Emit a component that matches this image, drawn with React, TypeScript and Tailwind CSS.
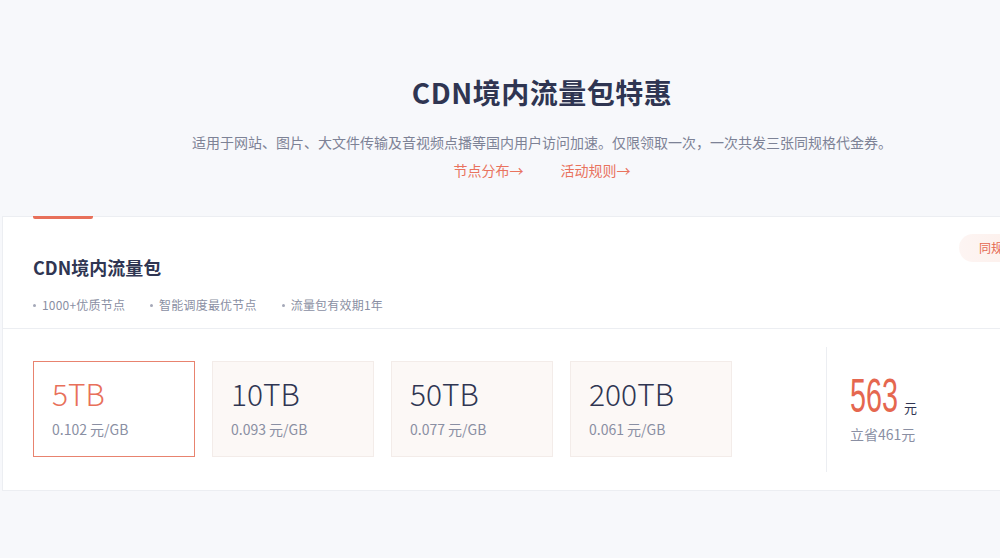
import React, { useState } from 'react';

const FONT = '"Noto Sans CJK SC", "Noto Sans", sans-serif';

const plans = [
  { size: '5TB', unit: '0.102 元/GB' },
  { size: '10TB', unit: '0.093 元/GB' },
  { size: '50TB', unit: '0.077 元/GB' },
  { size: '200TB', unit: '0.061 元/GB' },
];

const features = ['1000+优质节点', '智能调度最优节点', '流量包有效期1年'];

const App: React.FC = () => {
  const [active, setActive] = useState(0);

  return (
    <div className="h-[558px] w-full overflow-hidden bg-[#f7f8fb]" style={{ fontFamily: FONT }}>
      {/* Header */}
      <div className="flex flex-col items-center pt-[72px] pl-[84px]">
        <h1 className="text-[28px] leading-[40px] font-bold tracking-[0.5px] text-[#2f3552]">CDN境内流量包特惠</h1>
        <p className="mt-[20px] text-[14px] leading-[20px] text-[#7d8296]">
          适用于网站、图片、大文件传输及音视频点播等国内用户访问加速。仅限领取一次，一次共发三张同规格代金券。
        </p>
        <div className="mt-[8px] flex gap-[37px] text-[14px] leading-[20px] text-[#e9735e]">
          <a className="cursor-pointer">节点分布→</a>
          <a className="cursor-pointer">活动规则→</a>
        </div>
      </div>

      {/* Card */}
      <div className="relative mt-[36px] ml-[2px] w-[1030px] border border-[#eceef2] bg-white">
        <div className="absolute -top-px left-[30px] h-[3px] w-[60px] rounded-b-[2px] bg-[#e8705a]" />
        <div className="absolute top-[17px] left-[956px] flex h-[28px] items-center whitespace-nowrap rounded-full bg-gradient-to-r from-[#fdf5f3] to-[#fdeee9] px-[20px] text-[12px] text-[#e5674f]">
          同规格
        </div>

        <div className="border-b border-[#eceef2] px-[30px] pt-[37px] pb-[14px]">
          <h2 className="text-[18px] leading-[26px] font-bold text-[#2f3552]">CDN境内流量包</h2>
          <ul className="mt-[16px] flex gap-[25px] text-[12px] leading-[18px] text-[#8a8fa3]">
            {features.map((f) => (
              <li key={f} className="flex items-center gap-[6px] tracking-[0.2px]">
                <span className="h-[3px] w-[3px] rounded-full bg-[#a4a8b8]" />
                {f}
              </li>
            ))}
          </ul>
        </div>

        <div className="flex items-center px-[30px] pt-[16px] pb-[17px]">
          <div className="flex gap-[17px] py-[16px]">
            {plans.map((p, i) => (
              <button
                key={p.size}
                onClick={() => setActive(i)}
                className={
                  'flex h-[96px] w-[162px] flex-col items-start pl-[18px] pt-[13px] text-left ' +
                  (i === active
                    ? 'border border-[#e8836f] bg-white'
                    : 'border border-[#f3ece9] bg-[#fcf8f6]')
                }
              >
                <span
                  className={
                    'text-[30px] leading-[36px] font-light ' + (i === active ? 'text-[#e8705a]' : 'text-[#2f3552]')
                  }
                >
                  {p.size}
                </span>
                <span className="mt-[8px] text-[14px] leading-[20px] text-[#8a8fa3]">{p.unit}</span>
              </button>
            ))}
          </div>

          <div className="ml-[94px] flex h-[125px] flex-col border-l border-[#eceef2] pt-[27px] pl-[23px]">
            <div className="flex items-end">
              <span className="relative block h-[44px] w-[50px]">
                <span
                  className="absolute top-0 left-0 origin-left scale-x-[0.6] text-[48px] leading-[44px] text-[#e5674f]"
                  style={{ fontFamily: '"Liberation Sans", sans-serif' }}
                >
                  563
                </span>
              </span>
              <span className="ml-[4px] mb-[2px] text-[13px] leading-[16px] text-[#2f3552]">元</span>
            </div>
            <span className="mt-[6px] text-[14px] leading-[20px] text-[#8a8fa3]">立省461元</span>
          </div>
        </div>
      </div>
    </div>
  );
};

export default App;
